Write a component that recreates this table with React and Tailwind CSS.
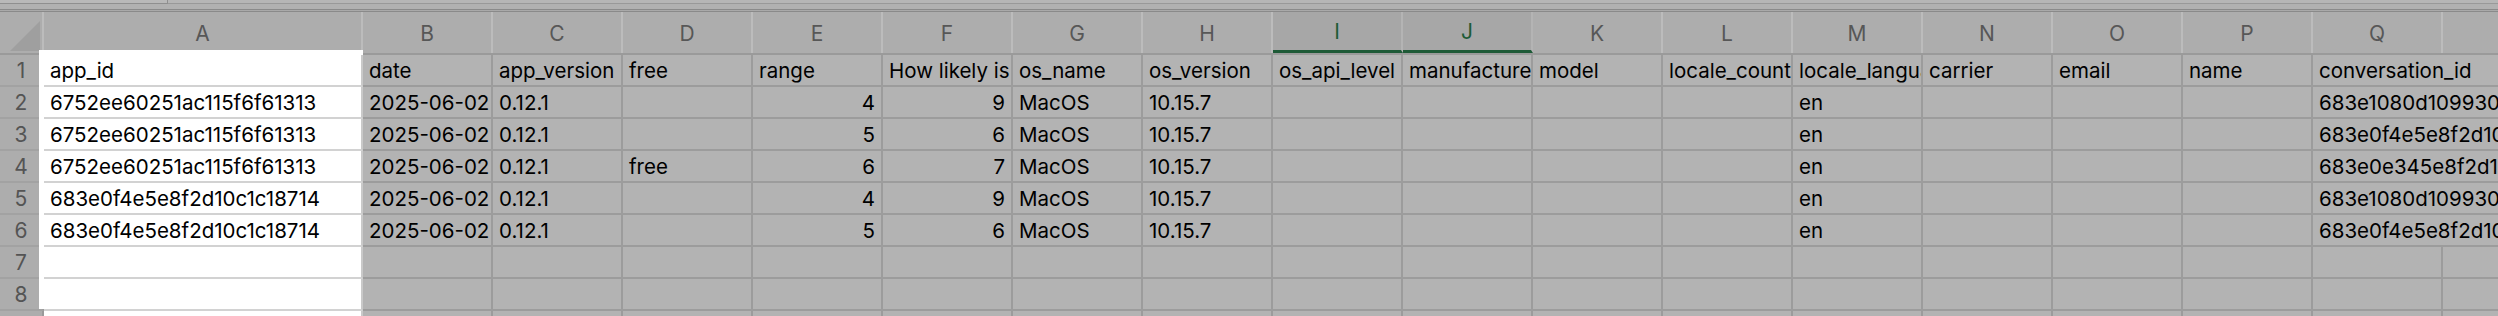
const COLS = [
  { key: 'A', w: 319 },
  { key: 'B', w: 130 },
  { key: 'C', w: 130 },
  { key: 'D', w: 130 },
  { key: 'E', w: 130 },
  { key: 'F', w: 130 },
  { key: 'G', w: 130 },
  { key: 'H', w: 130 },
  { key: 'I', w: 130 },
  { key: 'J', w: 130 },
  { key: 'K', w: 130 },
  { key: 'L', w: 130 },
  { key: 'M', w: 130 },
  { key: 'N', w: 130 },
  { key: 'O', w: 130 },
  { key: 'P', w: 130 },
  { key: 'Q', w: 130 },
  { key: 'R', w: 130 },
];

const HEADER = {
  A: 'app_id', B: 'date', C: 'app_version', D: 'free', E: 'range',
  F: 'How likely is it that you would recommend us', G: 'os_name', H: 'os_version',
  I: 'os_api_level', J: 'manufacturer', K: 'model', L: 'locale_country',
  M: 'locale_language', N: 'carrier', O: 'email', P: 'name', Q: 'conversation_id',
};

const mk = (app, free, range, likely, convo) => ({
  A: app, B: '2025-06-02 21:14:03', C: '0.12.1', D: free, E: range, F: likely,
  G: 'MacOS', H: '10.15.7', M: 'en', Q: convo,
});

const ROWS = [
  HEADER,
  mk('6752ee60251ac115f6f61313', '', 4, 9, '683e1080d109930a1b2c3d4e'),
  mk('6752ee60251ac115f6f61313', '', 5, 6, '683e0f4e5e8f2d10c1c18714'),
  mk('6752ee60251ac115f6f61313', 'free', 6, 7, '683e0e345e8f2d10c1c18701'),
  mk('683e0f4e5e8f2d10c1c18714', '', 4, 9, '683e1080d109930a1b2c3d4e'),
  mk('683e0f4e5e8f2d10c1c18714', '', 5, 6, '683e0f4e5e8f2d10c1c18714'),
  {},
  {},
  {},
];

function Cell({ col, value, rowIdx }) {
  const isA = col.key === 'A';
  const isNum = typeof value === 'number';
  const spill = col.key === 'Q' && rowIdx < 6;
  return (
    <div
      style={{ width: col.w }}
      className={`shrink-0 h-full flex items-end pb-[3px] whitespace-nowrap border-b-2 ${
        isA ? 'bg-white border-b-[#d2d2d2] border-r-2 border-r-[#c9c9c9]' : 'border-b-[#9c9c9c]'
      } ${!isA && !spill ? 'border-r-2 border-r-[#9c9c9c]' : ''} ${
        spill ? 'overflow-visible' : 'overflow-hidden'
      } ${isNum ? 'justify-end pr-[6px]' : 'pl-[6px]'}`}
    >
      <span className="leading-[22px]">{value}</span>
    </div>
  );
}

export default function App() {
  return (
    <div className="relative w-[2498px] h-[316px] overflow-hidden bg-[#b3b3b3] font-['Inter','Noto_Sans',sans-serif] text-[20.5px] text-black">
      {/* formula bar edge */}
      <div className="flex h-[4px]">
        <div className="w-[168px] bg-[#b9b9b9] border-r border-b border-[#8f8f8f]" />
        <div className="flex-1 bg-[#b6b6b6] border-b border-[#999999]" />
      </div>
      <div className="h-[5px] bg-[#b1b1b1]" />
      <div className="h-[3px] border-t border-b border-[#8a8a8a] bg-[#a9a9a9]" />

      {/* column headers */}
      <div className="flex h-[43px] bg-[#adadad] border-b-2 border-[#9a9a9a]">
        <div className="relative w-[44px] shrink-0 border-r-2 border-[#bcbcbc]">
          <svg className="absolute left-[10px] top-[9px]" width="30" height="30" viewBox="0 0 30 30">
            <polygon points="0,30 30,30 30,0" fill="#9f9f9f" />
          </svg>
        </div>
        {COLS.map((c) => {
          const sel = c.key === 'I' || c.key === 'J';
          return (
            <div
              key={c.key}
              style={{ width: c.w }}
              className={`shrink-0 flex items-center justify-center pt-[2px] text-[21px] border-r-2 ${
                sel
                  ? 'bg-[#a7a7a7] text-[#1d5b36] border-b-[3px] border-b-[#1e5a37] border-r-[#b4b4b4]'
                  : 'text-[#575757] border-r-[#bcbcbc]'
              }`}
            >
              {c.key}
            </div>
          );
        })}
      </div>

      {/* rows */}
      {ROWS.map((r, i) => (
        <div key={i} className="flex h-[32px]">
          <div className="w-[44px] shrink-0 flex items-end justify-center pb-[3px] text-[21px] text-[#545454] bg-[#adadad] border-r-2 border-r-[#9a9a9a] border-b-2 border-b-[#a2a2a2]">
            <span className="leading-[22px]">{i + 1}</span>
          </div>
          {COLS.map((c) => (
            <Cell key={c.key} col={c} value={r[c.key]} rowIdx={i} />
          ))}
        </div>
      ))}

      {/* selection highlight around A1:A8 */}
      <div className="pointer-events-none absolute left-[39px] top-[50px] w-[324px] h-[259px] border-l-[5px] border-t-[5px] border-white" />
    </div>
  );
}
